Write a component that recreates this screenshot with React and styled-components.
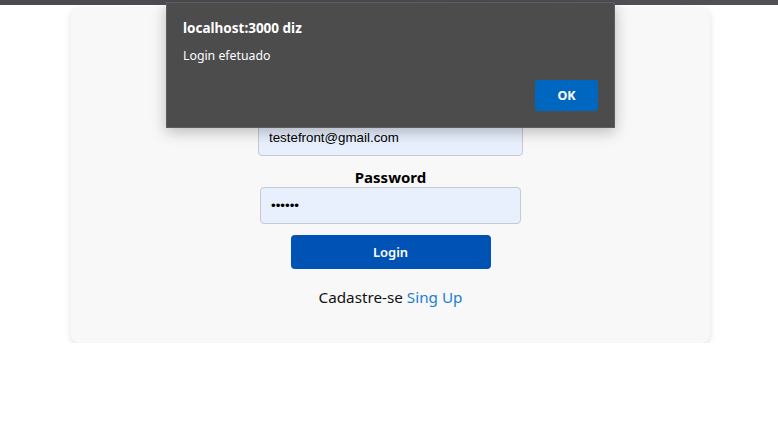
import React from 'react';
import styled, { createGlobalStyle } from 'styled-components';

const GlobalStyle = createGlobalStyle`
  body {
    margin: 0;
    background: #fff;
    font-family: "Segoe UI", "Noto Sans", sans-serif;
  }
`;

function App() {
  return (
    <>
      <GlobalStyle />
      <TopStrip />
      <Page>
        <Card>
          <Title>Login</Title>
          <Label $top={32}>Email</Label>
          <Input $width={265} type="email" value="testefront@gmail.com" readOnly />
          <Label $top={12}>Password</Label>
          <Input $width={261} type="password" value="123456" readOnly />
          <LoginButton>Login</LoginButton>
          <SignUpText>
            Cadastre-se <SignUpLink href="#">Sing Up</SignUpLink>
          </SignUpText>
        </Card>
      </Page>

      <Dialog>
        <DialogTitle>localhost:3000 diz</DialogTitle>
        <DialogMessage>Login efetuado</DialogMessage>
        <DialogActions>
          <OkButton>OK</OkButton>
        </DialogActions>
      </Dialog>
    </>
  );
}

const TopStrip = styled.div`
  height: 5px;
  background: linear-gradient(90deg, #4a4a50, #505056);
`;

const Page = styled.div`
  padding: 3px 68px 0 71px;
`;

const Card = styled.div`
  background: #f8f8f8;
  border-radius: 8px;
  box-shadow: 0 2px 6px rgba(0, 0, 0, 0.13);
  padding: 30px 0 36px;
  display: flex;
  flex-direction: column;
  align-items: center;
`;

const Title = styled.h2`
  margin: 0;
  font-size: 24px;
  line-height: 30px;
  color: #000;
`;

const Label = styled.label`
  margin-top: ${p => p.$top}px;
  margin-bottom: 1px;
  font-size: 15px;
  font-weight: 700;
  line-height: 18px;
  color: #000;
`;

const Input = styled.input`
  box-sizing: border-box;
  width: ${p => p.$width}px;
  height: 37px;
  padding: 0 10px;
  background: #e8f0fe;
  border: 1px solid #c5c9d2;
  border-radius: 4px;
  font-family: "Liberation Sans", Arial, sans-serif;
  font-size: 13.33px;
  color: #000;
  outline: none;
`;

const LoginButton = styled.button`
  margin-top: 11px;
  width: 200px;
  height: 34px;
  border: none;
  border-radius: 4px;
  background: #0052b4;
  color: #fff;
  font-family: "Segoe UI", "Noto Sans", sans-serif;
  font-size: 13px;
  font-weight: 600;
  cursor: pointer;
`;

const SignUpText = styled.p`
  margin: 19px 0 0;
  font-size: 15.25px;
  line-height: 19px;
  color: #111;
`;

const SignUpLink = styled.a`
  color: #1a7fd4;
  text-decoration: none;
`;

const Dialog = styled.div`
  position: absolute;
  top: 2px;
  left: 166px;
  width: 449px;
  height: 126px;
  box-sizing: border-box;
  padding: 15px 16px 16px;
  background: #4c4c4c;
  border: 1px solid #5e5e5e;
  box-shadow: 0 4px 14px rgba(0, 0, 0, 0.25);
  display: flex;
  flex-direction: column;
  color: #fff;
`;

const DialogTitle = styled.div`
  font-size: 13.5px;
  font-weight: 700;
  line-height: 20px;
`;

const DialogMessage = styled.div`
  margin-top: 9px;
  font-size: 12.3px;
  line-height: 18px;
`;

const DialogActions = styled.div`
  margin-top: auto;
  display: flex;
  justify-content: flex-end;
`;

const OkButton = styled.button`
  width: 63px;
  height: 31px;
  border: none;
  border-radius: 3px;
  background: #0067c0;
  color: #fff;
  font-family: "Segoe UI", "Noto Sans", sans-serif;
  font-size: 12.5px;
  font-weight: 700;
`;

export default App;
